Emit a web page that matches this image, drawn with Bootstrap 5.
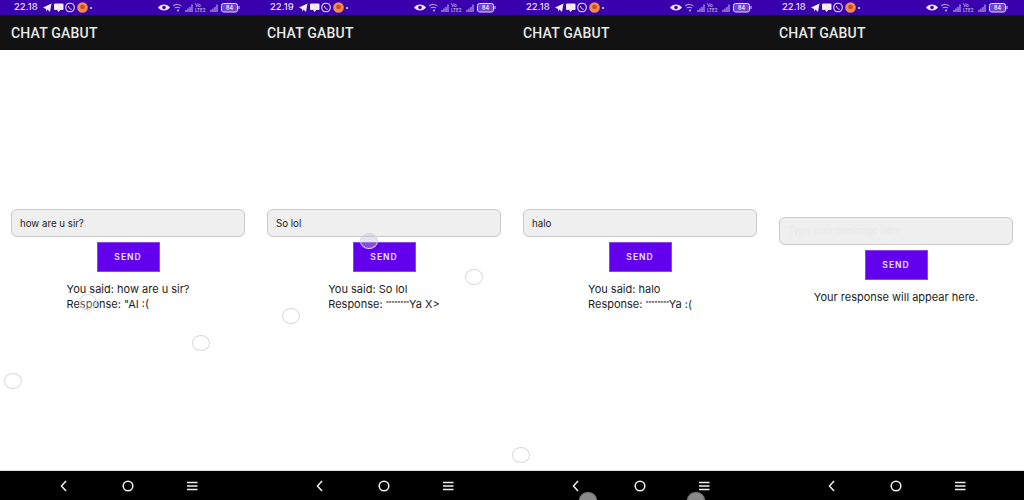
<!DOCTYPE html>
<html lang="en">
<head>
  <meta charset="UTF-8"/>
  <meta name="viewport" content="width=device-width, initial-scale=1"/>
  <title>Chat Gabut</title>
  <link href="https://cdn.jsdelivr.net/npm/bootstrap@5.3.0/dist/css/bootstrap.min.css" rel="stylesheet"/>
  <style>
    body { width: 1024px; height: 500px; overflow: hidden; background: #fff; font-family: Inter, "Liberation Sans", sans-serif; }
    .phone { width: 256px; height: 500px; }
    .status-strip { height: 15px; background: #3a00ae; color: #e6def5; font-size: 9.5px; font-weight: 500; padding: 0 14px; }
    .status-strip svg { display: block; }
    .status-mini { font-size: 4.5px; fill: #cfc5ea; font-family: Inter, sans-serif; }
    .status-batt { font-size: 5.5px; fill: #fff; font-family: Inter, sans-serif; }
    .chat-appbar { height: 35px; background: #121212; color: #e8e8e8; font-family: Roboto, Inter, sans-serif; font-size: 14px; font-weight: 500; padding: 1px 11px 0; letter-spacing: .2px; }
    .chat-body { height: 420px; padding: 0 11px; color: #1c1c1c; }
    .chat-input { height: 28px; font-size: 9.7px; padding: 0 8px; background: #efefef; border: 1px solid #c9c9c9; border-radius: 6px; color: #222; }
    .chat-input:focus { background: #efefef; border-color: #c9c9c9; box-shadow: none; }
    .chat-input::placeholder { color: #e9e9e9; opacity: 1; }
    .send-btn { width: 63px; height: 30px; margin-top: 5px; padding: 1px 0 0; background: #6200ee; border: 1px solid #8a45f0; border-radius: 0; color: #f0e6ff; font-size: 8.5px; font-weight: 600; letter-spacing: 1px; }
    .chat-reply { font-size: 11px; line-height: 15px; margin-top: 10px; margin-bottom: -1px; }
    .tiny-quotes { font-size: 7px; letter-spacing: -.35px; vertical-align: 1px; }
    .nav-strip { height: 30px; background: #000; border-top: 1px solid #ddd; }
    .touch-dot { position: absolute; width: 18px; height: 16px; border-radius: 50%; border: 1.25px solid #d8d9e2; background: rgba(255,255,255,.25); }
    .touch-dot.pressed { background: rgba(190,190,215,.4); }
    .touch-dot.dark { background: #8a8a8a; border-color: #777; }
  </style>
</head>
<body class="position-relative d-flex">
  <svg width="0" height="0" class="position-absolute">
    <symbol id="left-icons" viewBox="0 0 52 13">
      <path d="M1 6.500 9.500 2.500 8 11 5.500 8.500 4 10.500V8z" fill="#f0ebfa"/>
      <path d="M12.500 3h8.500v5.500h-3l-1.500 2-1-2h-3z" fill="#f0ebfa" stroke="#f0ebfa" stroke-linejoin="round"/>
      <circle cx="28" cy="6.500" r="4.300" fill="none" stroke="#f0ebfa" stroke-width="1.100"/>
      <path d="M26.300 5c.5 2 1.500 3 3.400 3.300" fill="none" stroke="#f0ebfa"/>
      <circle cx="40.500" cy="6.500" r="5.300" fill="#ef8f3c"/>
      <circle cx="40.500" cy="6" r="2.300" fill="#c9453e"/>
      <circle cx="49" cy="7" r="1" fill="#f0ebfa"/>
    </symbol>
    <symbol id="right-icons" viewBox="0 0 84 11">
      <path d="M0 5.500C3 1.500 9 1.500 12 5.500 9 9.500 3 9.500 0 5.500z" fill="#f0ebfa"/>
      <circle cx="6" cy="5.500" r="1.800" fill="#3a00ae"/>
      <path d="M15 4c2.500-2 6-2 8.500 0M16.500 6c1.500-1 4-1 5.500 0" fill="none" stroke="#cfc5ea"/>
      <circle cx="20" cy="8.500" r="1" fill="#cfc5ea"/>
      <path d="M28 10V8M30 10V6.500M32 10V5M34 10V2.500M53 10V8M55 10V6.500M57 10V5M59 10V2.500" stroke="#cfc5ea"/>
      <rect x="63.500" y="1.500" width="16" height="8.500" rx="2" fill="#cfc5ea" fill-opacity=".35" stroke="#e6def5"/>
      <path d="M81 4v3" stroke="#e6def5"/>
    </symbol>
    <symbol id="nav-icons" viewBox="0 0 140 14">
      <path d="M8 2 3.500 7 8 12" fill="none" stroke="#f2f2f2" stroke-width="1.500"/>
      <circle cx="70" cy="7" r="4.800" fill="none" stroke="#f2f2f2" stroke-width="1.500"/>
      <path d="M129 3.500h10.500M129 7h10.500M129 10.500h10.500" fill="none" stroke="#f2f2f2" stroke-width="1.500"/>
    </symbol>
  </svg>

  <!-- Screen 1 -->
  <div class="phone d-flex flex-column">
    <div class="status-strip d-flex align-items-center justify-content-between">
      <div class="d-flex align-items-center gap-1"><span>22.18</span><svg width="52" height="13"><use href="#left-icons"/></svg></div>
      <svg width="84" height="11"><use href="#right-icons"/><text class="status-mini" x="37" y="5">Vo</text><text class="status-mini" x="37" y="10">LTE2</text><text class="status-batt" x="68" y="8">84</text></svg>
    </div>
    <div class="chat-appbar d-flex align-items-center">CHAT GABUT</div>
    <div class="chat-body d-flex flex-column justify-content-center align-items-center">
      <input class="form-control chat-input" value="how are u sir?"/>
      <button class="btn send-btn">SEND</button>
      <div class="chat-reply">You said: how are u sir?<br/>Response: "AI :(</div>
    </div>
    <div class="nav-strip d-flex align-items-center justify-content-center"><svg width="140" height="14"><use href="#nav-icons"/></svg></div>
  </div>

  <!-- Screen 2 -->
  <div class="phone d-flex flex-column">
    <div class="status-strip d-flex align-items-center justify-content-between">
      <div class="d-flex align-items-center gap-1"><span>22.19</span><svg width="52" height="13"><use href="#left-icons"/></svg></div>
      <svg width="84" height="11"><use href="#right-icons"/><text class="status-mini" x="37" y="5">Vo</text><text class="status-mini" x="37" y="10">LTE2</text><text class="status-batt" x="68" y="8">84</text></svg>
    </div>
    <div class="chat-appbar d-flex align-items-center">CHAT GABUT</div>
    <div class="chat-body d-flex flex-column justify-content-center align-items-center">
      <input class="form-control chat-input" value="So lol"/>
      <button class="btn send-btn">SEND</button>
      <div class="chat-reply">You said: So lol<br/>Response: <span class="tiny-quotes">""""""""</span>Ya X&gt;</div>
    </div>
    <div class="nav-strip d-flex align-items-center justify-content-center"><svg width="140" height="14"><use href="#nav-icons"/></svg></div>
  </div>

  <!-- Screen 3 -->
  <div class="phone d-flex flex-column">
    <div class="status-strip d-flex align-items-center justify-content-between">
      <div class="d-flex align-items-center gap-1"><span>22.18</span><svg width="52" height="13"><use href="#left-icons"/></svg></div>
      <svg width="84" height="11"><use href="#right-icons"/><text class="status-mini" x="37" y="5">Vo</text><text class="status-mini" x="37" y="10">LTE2</text><text class="status-batt" x="68" y="8">84</text></svg>
    </div>
    <div class="chat-appbar d-flex align-items-center">CHAT GABUT</div>
    <div class="chat-body d-flex flex-column justify-content-center align-items-center">
      <input class="form-control chat-input" value="halo"/>
      <button class="btn send-btn">SEND</button>
      <div class="chat-reply">You said: halo<br/>Response: <span class="tiny-quotes">""""""""</span>Ya :(</div>
    </div>
    <div class="nav-strip d-flex align-items-center justify-content-center"><svg width="140" height="14"><use href="#nav-icons"/></svg></div>
  </div>

  <!-- Screen 4 -->
  <div class="phone d-flex flex-column">
    <div class="status-strip d-flex align-items-center justify-content-between">
      <div class="d-flex align-items-center gap-1"><span>22.18</span><svg width="52" height="13"><use href="#left-icons"/></svg></div>
      <svg width="84" height="11"><use href="#right-icons"/><text class="status-mini" x="37" y="5">Vo</text><text class="status-mini" x="37" y="10">LTE2</text><text class="status-batt" x="68" y="8">84</text></svg>
    </div>
    <div class="chat-appbar d-flex align-items-center">CHAT GABUT</div>
    <div class="chat-body d-flex flex-column justify-content-center align-items-center">
      <input class="form-control chat-input" placeholder="Type your message here"/>
      <button class="btn send-btn">SEND</button>
      <div class="chat-reply">Your response will appear here.</div>
    </div>
    <div class="nav-strip d-flex align-items-center justify-content-center"><svg width="140" height="14"><use href="#nav-icons"/></svg></div>
  </div>

  <!-- touch indicators sitting over the screens -->
  <span class="touch-dot" style="left:79px;top:294px"></span>
  <span class="touch-dot" style="left:192px;top:335px"></span>
  <span class="touch-dot" style="left:4px;top:373px"></span>
  <span class="touch-dot pressed" style="left:360px;top:233px"></span>
  <span class="touch-dot" style="left:465px;top:269px"></span>
  <span class="touch-dot" style="left:282px;top:308px"></span>
  <span class="touch-dot" style="left:512px;top:447px"></span>
  <span class="touch-dot dark" style="left:579px;top:492px"></span>
  <span class="touch-dot dark" style="left:687px;top:492px"></span>

  <script src="https://cdn.jsdelivr.net/npm/bootstrap@5.3.0/dist/js/bootstrap.bundle.min.js"></script>
</body>
</html>
